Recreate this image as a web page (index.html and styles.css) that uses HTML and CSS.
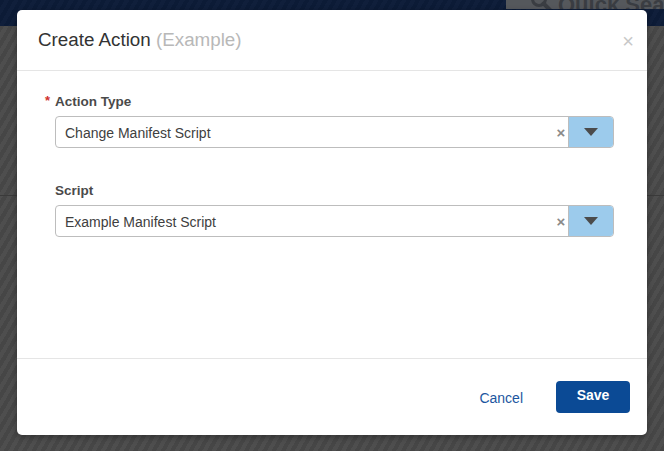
FILE: index.html
```html
<!DOCTYPE html>
<html>
<head>
<meta charset="utf-8">
<link rel="stylesheet" href="styles.css">
</head>
<body>
<div class="app">
  <div class="topbar">
    <div class="quick-search">
      <svg class="qs-icon" width="22" height="22" viewBox="0 0 22 22"><circle cx="9" cy="9" r="6.5" fill="none" stroke="#3a3d42" stroke-width="3"/><path d="M13.5 13.5 L20 20" stroke="#3a3d42" stroke-width="4" stroke-linecap="round"/></svg>
      <span>Quick Search</span>
    </div>
  </div>
  <div class="page">
    <div class="page-row"></div>
  </div>

  <div class="modal">
    <div class="modal-header">
      <h1 class="modal-title">Create Action <span class="muted">(Example)</span></h1>
      <span class="close">&#215;</span>
    </div>
    <div class="modal-body">
      <div class="field">
        <label class="field-label"><span class="req">*</span>Action Type</label>
        <div class="select">
          <span class="select-value">Change Manifest Script</span>
          <span class="select-clear">&#215;</span>
          <span class="select-arrow"><span class="tri"></span></span>
        </div>
      </div>
      <div class="field field-second">
        <label class="field-label">Script</label>
        <div class="select">
          <span class="select-value">Example Manifest Script</span>
          <span class="select-clear">&#215;</span>
          <span class="select-arrow"><span class="tri"></span></span>
        </div>
      </div>
    </div>
    <div class="modal-footer">
      <a class="btn-link">Cancel</a>
      <button class="btn-primary">Save</button>
    </div>
  </div>
</div>
</body>
</html>
```
FILE: styles.css
```css
html, body {
  margin: 0;
  padding: 0;
  width: 664px;
  height: 451px;
  overflow: hidden;
  font-family: "Liberation Sans", Arial, sans-serif;
}
.app {
  position: relative;
  width: 664px;
  height: 451px;
  display: flex;
  flex-direction: column;
  background: #4a4a4a;
}
.topbar {
  height: 26px;
  flex: none;
  background: repeating-linear-gradient(-60deg, #0c1b36 0 4px, #101f3b 4px 8px);
  position: relative;
}
.quick-search {
  position: absolute;
  left: 506px;
  right: 0;
  top: 0;
  height: 9px;
  background: #55585c;
  overflow: hidden;
  display: flex;
  align-items: flex-end;
  color: #3a3d42;
  font-size: 22px;
  font-weight: bold;
}
.quick-search .qs-icon {
  margin-left: 24px;
  margin-bottom: -3px;
  flex: none;
}
.quick-search span {
  margin-left: 6px;
  line-height: 22px;
  margin-bottom: -7px;
  white-space: nowrap;
}
.page {
  flex: 1;
  background: repeating-linear-gradient(-60deg, #464646 0 4px, #4e4e4e 4px 8px);
}
.page-row {
  height: 169px;
  border-bottom: 1px solid #3a3a3a;
}
.modal {
  position: absolute;
  left: 17px;
  top: 10px;
  width: 630px;
  height: 425px;
  background: #fff;
  border-radius: 5px;
  display: flex;
  flex-direction: column;
  box-shadow: 0 2px 6px rgba(0,0,0,0.3);
}
.modal-header {
  height: 60px;
  flex: none;
  border-bottom: 1px solid #e5e5e5;
  display: flex;
  align-items: center;
  justify-content: space-between;
  padding: 0 13px 0 21px;
}
.modal-title {
  margin: 0;
  font-size: 18.8px;
  font-weight: normal;
  color: #333;
  font-family: "Liberation Sans", Arial, sans-serif;
}
.muted {
  color: #b8b8b8;
}
.close {
  font-size: 20px;
  color: #c8c8c8;
  line-height: 20px;
  margin-top: 2px;
}
.modal-body {
  flex: 1;
  padding: 23px 33px 0 38px;
}
.field {
  display: flex;
  flex-direction: column;
}
.field-second {
  margin-top: 35px;
}
.field-label {
  font-size: 13.5px;
  font-weight: bold;
  color: #4a4a4a;
  line-height: 16px;
  margin-bottom: 6px;
  position: relative;
}
.req {
  position: absolute;
  left: -10px;
  top: -1px;
  color: #d0312d;
  font-size: 13px;
}
.select {
  height: 32px;
  box-sizing: border-box;
  border: 1px solid #bdbdbd;
  border-radius: 4px;
  display: flex;
  align-items: stretch;
  overflow: hidden;
}
.select-value {
  flex: 1;
  display: flex;
  align-items: center;
  padding-left: 9px;
  padding-top: 1px;
  font-size: 14px;
  color: #404040;
}
.select-clear {
  width: 14px;
  display: flex;
  align-items: center;
  justify-content: center;
  color: #8a8a8a;
  font-size: 15px;
  font-weight: bold;
}
.select-arrow {
  width: 44px;
  background: #9ccbec;
  border-left: 1px solid #bdbdbd;
  display: flex;
  align-items: center;
  justify-content: center;
}
.tri {
  width: 0;
  height: 0;
  border-left: 7px solid transparent;
  border-right: 7px solid transparent;
  border-top: 8px solid #4b4b4b;
}
.modal-footer {
  height: 77px;
  flex: none;
  border-top: 1px solid #e5e5e5;
  display: flex;
  align-items: flex-start;
  justify-content: flex-end;
  padding: 22px 17px 0 0;
  box-sizing: border-box;
}
.btn-link {
  color: #1c56a0;
  font-size: 14px;
  margin-top: 9px;
  margin-right: 33px;
  font-weight: 500;
}
.btn-primary {
  width: 74px;
  height: 32px;
  border: none;
  border-radius: 4px;
  background: #0b4a95;
  color: #fff;
  font-family: "Liberation Sans", Arial, sans-serif;
  font-weight: bold;
  font-size: 14px;
  padding: 0 0 4px 0;
}
```
